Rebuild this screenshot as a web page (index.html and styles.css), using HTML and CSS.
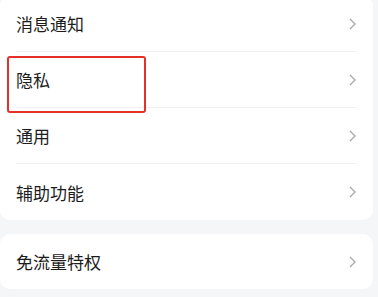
FILE: index.html
```html
<!DOCTYPE html>
<html lang="zh">
<head>
<meta charset="utf-8">
<link rel="stylesheet" href="styles.css">
</head>
<body>
<div class="page">
  <div class="card">
    <div class="row"><span class="label">消息通知</span><svg class="chev" viewBox="0 0 7 12"><path d="M1 1 L6 6 L1 11"/></svg></div>
    <div class="row"><span class="label">隐私</span><svg class="chev" viewBox="0 0 7 12"><path d="M1 1 L6 6 L1 11"/></svg></div>
    <div class="row"><span class="label">通用</span><svg class="chev" viewBox="0 0 7 12"><path d="M1 1 L6 6 L1 11"/></svg></div>
    <div class="row last"><span class="label">辅助功能</span><svg class="chev" viewBox="0 0 7 12"><path d="M1 1 L6 6 L1 11"/></svg></div>
  </div>
  <div class="card">
    <div class="row last short"><span class="label">免流量特权</span><svg class="chev" viewBox="0 0 7 12"><path d="M1 1 L6 6 L1 11"/></svg></div>
  </div>
  <div class="highlight"></div>
</div>
</body>
</html>
```
FILE: styles.css
```css
html, body {
  margin: 0;
  padding: 0;
  background: #f5f6f8;
}
body {
  font-family: "Noto Sans CJK SC", "Noto Sans", sans-serif;
  overflow: hidden;
}
.page {
  position: relative;
  width: 378px;
  height: 297px;
  padding-top: 0;
}
.card {
  background: #ffffff;
  width: 373px;
  border-radius: 10px;
  margin-bottom: 14px;
}
.card:first-child {
  margin-top: -4px;
}
.row {
  height: 56px;
  margin: 0 17px 0 16px;
  display: flex;
  align-items: center;
  justify-content: space-between;
  border-bottom: 1px solid #efeff1;
  box-sizing: border-box;
}
.row.last {
  border-bottom: none;
}
.row.short {
  height: 55px;
}
.label {
  font-size: 17px;
  color: #1c1c1c;
  line-height: 1;
}
.chev {
  width: 7px;
  height: 12px;
  fill: none;
  stroke: #a9a9ab;
  stroke-width: 1.3;
}
.highlight {
  position: absolute;
  left: 7px;
  top: 60px;
  width: 139px;
  height: 57px;
  box-sizing: border-box;
  border: 2.5px solid #e3312a;
  border-radius: 3px;
}
```
